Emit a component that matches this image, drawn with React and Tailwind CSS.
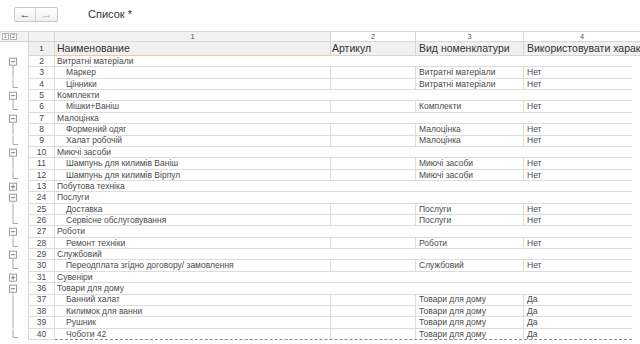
import React from "react";

const rows = [
  { n: 2, name: "Витратні матеріали", g: "open" },
  { n: 3, name: "Маркер", vid: "Витратні матеріали", use: "Нет" },
  { n: 4, name: "Цінники", vid: "Витратні матеріали", use: "Нет", last: true },
  { n: 5, name: "Комплекти", g: "open" },
  { n: 6, name: "Мішки+Ваніш", vid: "Комплекти", use: "Нет", last: true },
  { n: 7, name: "Малоцінка", g: "open" },
  { n: 8, name: "Формений одяг", vid: "Малоцінка", use: "Нет" },
  { n: 9, name: "Халат робочій", vid: "Малоцінка", use: "Нет", last: true },
  { n: 10, name: "Миючі засоби", g: "open" },
  { n: 11, name: "Шампунь для килимів Ваніш", vid: "Миючі засоби", use: "Нет" },
  { n: 12, name: "Шампунь для килимів Вірпул", vid: "Миючі засоби", use: "Нет", last: true },
  { n: 13, name: "Побутова техніка", g: "closed" },
  { n: 24, name: "Послуги", g: "open" },
  { n: 25, name: "Доставка", vid: "Послуги", use: "Нет" },
  { n: 26, name: "Сервісне обслуговування", vid: "Послуги", use: "Нет", last: true },
  { n: 27, name: "Роботи", g: "open" },
  { n: 28, name: "Ремонт техніки", vid: "Роботи", use: "Нет", last: true },
  { n: 29, name: "Службовий", g: "open" },
  { n: 30, name: "Переодплата згідно договору/ замовлення", vid: "Службовий", use: "Нет", last: true },
  { n: 31, name: "Сувеніри", g: "closed" },
  { n: 36, name: "Товари для дому", g: "open" },
  { n: 37, name: "Банний халат", vid: "Товари для дому", use: "Да" },
  { n: 38, name: "Килимок для ванни", vid: "Товари для дому", use: "Да" },
  { n: 39, name: "Рушник", vid: "Товари для дому", use: "Да" },
  { n: 40, name: "Чоботи 42", vid: "Товари для дому", use: "Да", last: true },
];

const H = 11.36;

// tree lines in the left gutter
const TreeMark = ({ row }) => (
  <svg width="29" height={H} viewBox={`0 0 29 ${H}`} className="block">
    {row.g && (
      <>
        <rect x="9.5" y="2.2" width="7" height="7" fill="#fff" stroke="#9c9c9c" />
        <line x1="11" y1="5.7" x2="15" y2="5.7" stroke="#777" />
        {row.g === "closed" && <line x1="13" y1="3.7" x2="13" y2="7.7" stroke="#777" />}
        {row.g === "open" && <line x1="13" y1="9.2" x2="13" y2={H} stroke="#a8a8a8" />}
      </>
    )}
    {!row.g && !row.last && <line x1="13" y1="0" x2="13" y2={H} stroke="#a8a8a8" />}
    {!row.g && row.last && (
      <polyline points="13,0 13,8.5 18,8.5" fill="none" stroke="#a8a8a8" />
    )}
  </svg>
);

export default function App() {
  return (
    <div
      className="w-[640px] h-[344px] overflow-hidden bg-white text-[#4a4a4a]"
      style={{ fontFamily: '"Liberation Sans", Arial, sans-serif' }}
    >
      {/* toolbar */}
      <div className="flex items-center h-[31px] pl-[14px] pb-[3px]">
        <div className="flex h-[15px] border border-[#c9c9c9] rounded-[2px] bg-gradient-to-b from-white to-[#efefef]">
          <div className="w-[21px] flex items-center justify-center border-r border-[#d4d4d4] text-[11px] leading-none text-[#333]">
            ←
          </div>
          <div className="w-[21px] flex items-center justify-center text-[11px] leading-none text-[#aaa]">
            →
          </div>
        </div>
        <div className="ml-[30px] text-[11px] leading-none text-[#333]">Список *</div>
      </div>

      {/* column numbers */}
      <div className="flex h-[11px] bg-[#f2f2f2] border-t border-[#d6d6d6] text-[7.5px] leading-none text-[#555]">
        <div className="w-[29px] flex items-center gap-[1px] pl-[2px] border-r border-b border-[#d6d6d6]">
          <span className="w-[7px] h-[7px] border border-[#b5b5b5] bg-white text-[5px] flex items-center justify-center">1</span>
          <span className="w-[7px] h-[7px] border border-[#b5b5b5] bg-white text-[5px] flex items-center justify-center">2</span>
        </div>
        <div className="w-[26px] border-r border-b border-[#d6d6d6]" />
        <div className="w-[276px] flex items-center justify-center border-r border-b border-[#d6d6d6]">1</div>
        <div className="w-[85px] flex items-center justify-center border-r border-b border-[#d6d6d6] bg-white">2</div>
        <div className="w-[108px] flex items-center justify-center border-r border-b border-[#d6d6d6] bg-white">3</div>
        <div className="w-[116px] flex items-center justify-center border-b border-[#d6d6d6] bg-white">4</div>
      </div>

      {/* header */}
      <div className="flex h-[14px] bg-[#f0f0f0] text-[10.5px] leading-none text-[#333] whitespace-nowrap">
        <div className="w-[29px] border-r border-[#d6d6d6] bg-white" />
        <div className="w-[26px] flex items-center justify-center border-r border-b border-[#d6d6d6] text-[8px]">1</div>
        <div className="w-[276px] flex items-center pl-[2px] border-r border-b border-b-[#f2c99a] border-r-[#d6d6d6]">
          Наименование
        </div>
        <div className="w-[85px] flex items-center pl-[1px] border-r border-b border-[#d6d6d6]">Артикул</div>
        <div className="w-[108px] flex items-center pl-[3px] border-r border-b border-[#d6d6d6]">Вид номенклатури</div>
        <div className="w-[116px] flex items-center pl-[3px] border-b border-[#d6d6d6] overflow-hidden">
          Використовувати характеристики
        </div>
      </div>

      {/* rows */}
      <div className="text-[8.5px] leading-none whitespace-nowrap">
        {rows.map((row, i) => {
          const isLast = i === rows.length - 1;
          const line = isLast ? "border-b border-dashed border-[#8a8a8a]" : "border-b border-[#dcdcdc]";
          return (
            <div key={row.n} className="flex h-[11.36px]">
              <div className="w-[29px] border-r border-[#d6d6d6]">
                <TreeMark row={row} />
              </div>
              <div className="w-[26px] flex items-center justify-center border-r border-b border-[#dcdcdc]">
                {row.n}
              </div>
              {row.g ? (
                <div className={`w-[577px] flex items-center pl-[2px] ${line}`}>{row.name}</div>
              ) : (
                <div className={`w-[577px] flex ${line}`}>
                  <div className="w-[276px] flex items-center pl-[11px] border-r border-[#dcdcdc] overflow-hidden">
                    {row.name}
                  </div>
                  <div className="w-[85px] border-r border-[#dcdcdc]" />
                  <div className="w-[108px] flex items-center pl-[3px] border-r border-[#dcdcdc]">{row.vid}</div>
                  <div className="w-[108px] flex items-center pl-[3px]">{row.use}</div>
                </div>
              )}
            </div>
          );
        })}
      </div>
    </div>
  );
}
